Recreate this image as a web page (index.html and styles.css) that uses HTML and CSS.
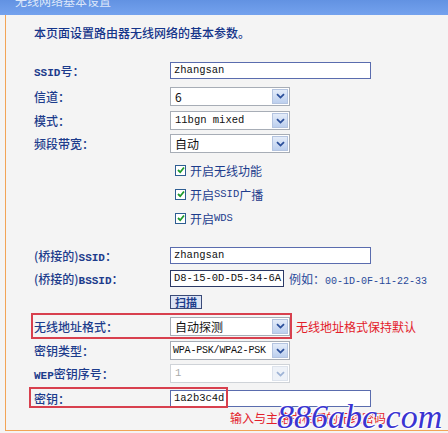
FILE: index.html
```html
<!DOCTYPE html>
<html lang="zh-CN">
<head>
  <meta charset="UTF-8" />
  <title>无线网络基本设置</title>
  <link rel="stylesheet" href="styles.css">
</head>
<body>
  <div class="titlebar"><span>无线网络基本设置</span></div>

  <div class="panel">
    <p class="intro">本页面设置路由器无线网络的基本参数。</p>

    <!-- Basic settings -->
    <div class="row h26">
      <div class="lbl"><span class="en">SSID</span>号：</div>
      <div class="text wide">zhangsan</div>
    </div>
    <div class="row h26">
      <div class="lbl">信道：</div>
      <div class="select"><span class="val">6</span><span class="arrow"><svg width="9" height="6" viewBox="0 0 9 6"><path d="M1 1.2 L4.5 4.6 L8 1.2" fill="none" stroke="#2b4f9a" stroke-width="1.8"/></svg></span></div>
    </div>
    <div class="row">
      <div class="lbl">模式：</div>
      <div class="select"><span class="val mono">11bgn mixed</span><span class="arrow"><svg width="9" height="6" viewBox="0 0 9 6"><path d="M1 1.2 L4.5 4.6 L8 1.2" fill="none" stroke="#2b4f9a" stroke-width="1.8"/></svg></span></div>
    </div>
    <div class="row">
      <div class="lbl">频段带宽：</div>
      <div class="select"><span class="val">自动</span><span class="arrow"><svg width="9" height="6" viewBox="0 0 9 6"><path d="M1 1.2 L4.5 4.6 L8 1.2" fill="none" stroke="#2b4f9a" stroke-width="1.8"/></svg></span></div>
    </div>

    <div class="checks">
      <div class="row h24"><div class="lbl"></div><div class="check"><span class="box"><svg width="8" height="8" viewBox="0 0 8 8"><path d="M1 4 L3.2 6.2 L7 1.5" fill="none" stroke="#1d9a2c" stroke-width="1.8"/></svg></span>开启无线功能</div></div>
      <div class="row h24"><div class="lbl"></div><div class="check"><span class="box"><svg width="8" height="8" viewBox="0 0 8 8"><path d="M1 4 L3.2 6.2 L7 1.5" fill="none" stroke="#1d9a2c" stroke-width="1.8"/></svg></span>开启<span class="en">SSID</span>广播</div></div>
      <div class="row h24"><div class="lbl"></div><div class="check"><span class="box"><svg width="8" height="8" viewBox="0 0 8 8"><path d="M1 4 L3.2 6.2 L7 1.5" fill="none" stroke="#1d9a2c" stroke-width="1.8"/></svg></span>开启<span class="en">WDS</span></div></div>
    </div>

    <!-- WDS settings -->
    <div class="wds">
      <div class="row">
        <div class="lbl">(桥接的)<span class="en">SSID</span>：</div>
        <div class="text wide">zhangsan</div>
      </div>
      <div class="row">
        <div class="lbl">(桥接的)<span class="en">BSSID</span>：</div>
        <div class="text bssid">D8-15-0D-D5-34-6A</div>
        <span class="example">例如：<span class="en">00-1D-0F-11-22-33</span></span>
      </div>
      <div class="row">
        <div class="lbl"></div>
        <div class="btn">扫描</div>
      </div>
      <div class="row h26">
        <div class="lbl">无线地址格式：</div>
        <div class="select"><span class="val">自动探测</span><span class="arrow"><svg width="9" height="6" viewBox="0 0 9 6"><path d="M1 1.2 L4.5 4.6 L8 1.2" fill="none" stroke="#2b4f9a" stroke-width="1.8"/></svg></span></div>
        <span class="note">无线地址格式保持默认</span>
      </div>
      <div class="row">
        <div class="lbl">密钥类型：</div>
        <div class="select"><span class="val mono small">WPA-PSK/WPA2-PSK</span><span class="arrow"><svg width="9" height="6" viewBox="0 0 9 6"><path d="M1 1.2 L4.5 4.6 L8 1.2" fill="none" stroke="#2b4f9a" stroke-width="1.8"/></svg></span></div>
      </div>
      <div class="row">
        <div class="lbl"><span class="en">WEP</span>密钥序号：</div>
        <div class="select disabled"><span class="val mono">1</span><span class="arrow"><svg width="9" height="6" viewBox="0 0 9 6"><path d="M1 1.2 L4.5 4.6 L8 1.2" fill="none" stroke="#9fb4d6" stroke-width="1.8"/></svg></span></div>
      </div>
      <div class="row h26">
        <div class="lbl">密钥：</div>
        <div class="text wide">1a2b3c4d</div>
      </div>
      <div class="hint">输入与主路由相同的无线密码</div>
    </div>

    <!-- annotations drawn over the form -->
    <div class="mark mark-format"></div>
    <div class="mark mark-key"></div>
    <div class="watermark">886abc.com</div>
  </div>
</body>
</html>
```

FILE: styles.css
```css
body {
  margin: 0;
  background: #f4f4f4;
  font-family: "Noto Sans CJK SC", sans-serif;
  font-size: 12px;
  color: #1d3c8c;
  overflow: hidden;
}
.titlebar {
  height: 15px;
  overflow: hidden;
  background: linear-gradient(#6292e2, #74a2ee);
}
.titlebar span {
  display: block;
  margin-top: -6px;
  padding-left: 15px;
  line-height: 14px;
  color: #dde7fa;
}
.panel {
  position: relative;
  margin-left: 5px;
  height: 415px;
  border-left: 1px solid #f2a457;
  border-bottom: 1px solid #f2a457;
  padding-left: 28px;
}
.intro {
  margin: 0;
  padding-top: 9px;
  line-height: 18px;
  color: #15358a;
  font-weight: 500;
}
.row {
  display: flex;
  align-items: center;
  height: 23px;
  white-space: nowrap;
}
.h24 { height: 24px; }
.h26 { height: 26px; }
.intro + .row { margin-top: 15px; }
.checks { margin-top: 3px; }
.wds { margin-top: 14px; }
.lbl {
  width: 136px;
  flex-shrink: 0;
  font-weight: 500;
}
.en, .mono {
  font-family: "Liberation Mono", monospace;
  font-size: 10.5px;
}
.lbl .en {
  font-size: 11px;
  font-weight: 700;
}
.text {
  box-sizing: border-box;
  height: 17px;
  line-height: 15px;
  padding-left: 3px;
  background: #fff;
  border: 1px solid #5a6cae;
  font-family: "Liberation Mono", monospace;
  font-size: 10.5px;
  color: #111;
}
.wide { width: 201px; }
.bssid {
  width: 114px;
  border-color: #2c3a66;
}
.example {
  margin-left: 5px;
  color: #2a4a9a;
}
.example .en { font-size: 10px; }
.select {
  box-sizing: border-box;
  display: flex;
  width: 120px;
  height: 19px;
  background: #fff;
  border: 1px solid #a7adb6;
}
.select .val {
  flex: 1;
  overflow: hidden;
  padding-left: 4px;
  line-height: 17px;
  color: #111;
}
.select .val.small {
  padding-left: 2px;
  font-size: 10px;
  letter-spacing: -0.2px;
}
.select .arrow {
  box-sizing: border-box;
  flex-shrink: 0;
  width: 16px;
  margin: 1px;
  display: flex;
  align-items: center;
  justify-content: center;
  background: linear-gradient(#e4ecf9, #bccfee);
  border: 1px solid #b4c4e0;
}
.select.disabled { border-color: #cfd3d8; }
.select.disabled .val { color: #aaa; }
.select.disabled .arrow {
  background: #eef2f8;
  border-color: #dde3ec;
}
.check {
  display: flex;
  align-items: center;
  padding-left: 5px;
}
.box {
  box-sizing: border-box;
  width: 11px;
  height: 11px;
  margin-right: 4px;
  display: flex;
  align-items: center;
  justify-content: center;
  background: #fff;
  border: 1px solid #2d5d92;
}
.btn {
  box-sizing: border-box;
  width: 32px;
  height: 14px;
  line-height: 12px;
  text-align: center;
  background: #dde5f5;
  border: 1px solid #3a4a78;
  font-weight: 700;
  font-size: 11px;
}
.note {
  margin-left: 6px;
  color: #e3202a;
}
.hint {
  padding-left: 196px;
  line-height: 13px;
  color: #e3202a;
}
.mark {
  position: absolute;
  border: 2px solid #d8404e;
  box-sizing: border-box;
}
.mark-format {
  left: 25px;
  top: 298px;
  width: 261px;
  height: 26px;
}
.mark-key {
  left: 23px;
  top: 372px;
  width: 199px;
  height: 21px;
}
.watermark {
  position: absolute;
  left: 271px;
  top: 385px;
  font-family: "Liberation Serif", serif;
  font-style: italic;
  font-size: 34px;
  line-height: 33px;
  color: #3a34d2;
  text-shadow: 1px 1px 0 #fff, -1px -1px 0 #fff;
}
```
